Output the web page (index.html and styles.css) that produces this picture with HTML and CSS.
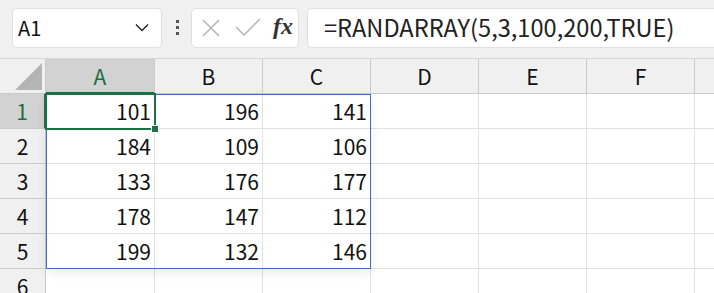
FILE: index.html
```html
<!DOCTYPE html>
<html lang="ja">
<head>
    <meta charset="UTF-8">
    <title>Sheet</title>
    <link rel="stylesheet" href="styles.css">
</head>
<body>
    <div class="toolbar">
        <div class="namebox">
            <span>A1</span>
            <svg width="14" height="9" viewBox="0 0 14 9"><path d="M1 1.5 L7 7.5 L13 1.5" fill="none" stroke="#222" stroke-width="1.4"/></svg>
        </div>
        <div class="grip"><i></i><i></i><i></i></div>
        <div class="fbuttons">
            <svg width="20" height="20" viewBox="0 0 20 20"><path d="M2 2 L18 18 M18 2 L2 18" stroke="#b4b4b4" stroke-width="1.5"/></svg>
            <svg width="26" height="20" viewBox="0 0 26 20"><path d="M1 9 L9 17 L25 1" fill="none" stroke="#b4b4b4" stroke-width="1.5"/></svg>
            <span class="fx">fx</span>
        </div>
        <div class="formula">=RANDARRAY(5,3,100,200,TRUE)</div>
    </div>

    <div class="sheet">
        <div class="grid">
            <div class="corner"><b></b></div>
            <div class="colhead sel">A</div>
            <div class="colhead">B</div>
            <div class="colhead">C</div>
            <div class="colhead">D</div>
            <div class="colhead">E</div>
            <div class="colhead">F</div>
            <div class="colhead"></div>

            <div class="rowhead sel">1</div>
            <div class="cell">101</div><div class="cell">196</div><div class="cell">141</div>
            <div class="cell"></div><div class="cell"></div><div class="cell"></div><div class="cell"></div>

            <div class="rowhead">2</div>
            <div class="cell">184</div><div class="cell">109</div><div class="cell">106</div>
            <div class="cell"></div><div class="cell"></div><div class="cell"></div><div class="cell"></div>

            <div class="rowhead">3</div>
            <div class="cell">133</div><div class="cell">176</div><div class="cell">177</div>
            <div class="cell"></div><div class="cell"></div><div class="cell"></div><div class="cell"></div>

            <div class="rowhead">4</div>
            <div class="cell">178</div><div class="cell">147</div><div class="cell">112</div>
            <div class="cell"></div><div class="cell"></div><div class="cell"></div><div class="cell"></div>

            <div class="rowhead">5</div>
            <div class="cell">199</div><div class="cell">132</div><div class="cell">146</div>
            <div class="cell"></div><div class="cell"></div><div class="cell"></div><div class="cell"></div>

            <div class="rowhead">6</div>
            <div class="cell"></div><div class="cell"></div><div class="cell"></div>
            <div class="cell"></div><div class="cell"></div><div class="cell"></div><div class="cell"></div>
        </div>
        <div class="spill"></div>
        <div class="active"><span class="handle"></span></div>
    </div>
</body>
</html>
```

FILE: styles.css
```css
body {
    margin: 0;
    width: 714px;
    height: 293px;
    overflow: hidden;
    background: #fff;
    font-family: "Noto Sans CJK JP", "Noto Sans", sans-serif;
    color: #000;
}
.toolbar {
    display: flex;
    align-items: center;
    height: 59px;
    padding: 0 0 3px 12px;
    box-sizing: border-box;
    background: #f0f0f0;
    border-bottom: 1px solid #d8d8d8;
}
.namebox {
    display: flex;
    align-items: center;
    justify-content: space-between;
    width: 150px;
    height: 40px;
    box-sizing: border-box;
    padding: 0 12px 0 5px;
    background: #fff;
    border: 1px solid #e0e0e0;
    border-radius: 5px;
    font-size: 20px;
    color: #111;
}
.grip {
    display: flex;
    flex-direction: column;
    gap: 3px;
    margin: 0 12px 0 14px;
}
.grip i {
    width: 3px;
    height: 3px;
    background: #555;
}
.fbuttons {
    display: flex;
    align-items: center;
    gap: 14px;
    width: 108px;
    height: 40px;
    box-sizing: border-box;
    padding-left: 9px;
    background: #fff;
    border: 1px solid #e0e0e0;
    border-radius: 5px;
}
.fx {
    font-family: "Liberation Serif", serif;
    font-style: italic;
    font-weight: bold;
    font-size: 24px;
    color: #333;
    margin-left: -2px;
    margin-top: -3px;
}
.formula {
    flex: 1;
    height: 40px;
    margin-left: 8px;
    box-sizing: border-box;
    padding: 4px 0 0 16px;
    background: #fff;
    border: 1px solid #e0e0e0;
    border-right: none;
    border-radius: 5px 0 0 5px;
    font-size: 23.6px;
    line-height: 28px;
    color: #222;
    white-space: nowrap;
}
.sheet {
    position: relative;
}
.grid {
    display: grid;
    grid-template-columns: 46px 109px repeat(5, 108px) 20px;
    grid-auto-rows: 35px;
}
.grid > div {
    box-sizing: border-box;
    border-right: 1px solid #e1e1e1;
    border-bottom: 1px solid #e1e1e1;
    font-size: 21px;
}
.corner {
    position: relative;
    background: #f0f0f0;
}
.grid > .corner,
.grid > .colhead,
.grid > .rowhead {
    border-color: #cacaca;
}
.corner b {
    position: absolute;
    right: 3px;
    bottom: 3px;
    width: 0;
    height: 0;
    border-left: 27px solid transparent;
    border-bottom: 27px solid #b4b4b4;
}
.colhead {
    display: flex;
    align-items: center;
    justify-content: center;
    background: #f0f0f0;
    color: #111;
}
.colhead.sel {
    background: #d2d2d2;
    color: #1c6c41;
    border-bottom: 2px solid #1e7145 !important;
}
.rowhead {
    display: flex;
    align-items: center;
    justify-content: center;
    background: #f0f0f0;
    color: #111;
}
.rowhead.sel {
    background: #d2d2d2;
    color: #1c6c41;
    border-right: 2px solid #1e7145 !important;
}
.cell {
    display: flex;
    align-items: center;
    justify-content: flex-end;
    padding-right: 3px;
    color: #111;
}
.spill {
    position: absolute;
    left: 46px;
    top: 35px;
    width: 325px;
    height: 175px;
    box-sizing: border-box;
    border: 1px solid #3a6fc9;
    box-shadow: 0 4px 10px rgba(0, 0, 0, 0.08);
}
.active {
    position: absolute;
    left: 45px;
    top: 34px;
    width: 111px;
    height: 37px;
    box-sizing: border-box;
    border: 2px solid #1e7145;
}
.handle {
    position: absolute;
    right: -5px;
    bottom: -5px;
    width: 6px;
    height: 6px;
    background: #1e7145;
    border: 1px solid #fff;
}
```
